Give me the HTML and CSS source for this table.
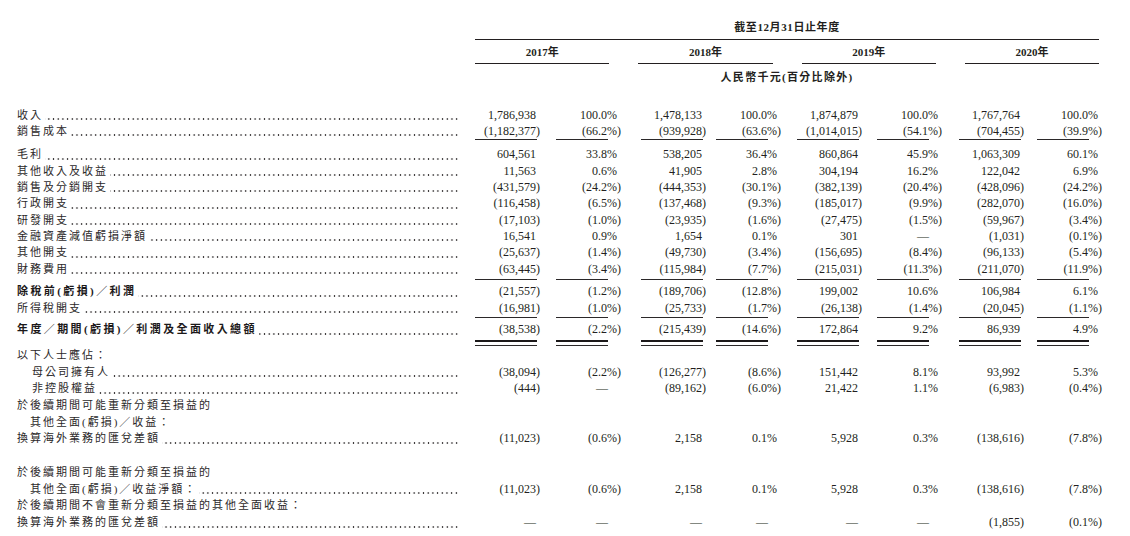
FILE: index.html
```html
<!DOCTYPE html>
<html lang="zh-Hant">
<head>
<meta charset="utf-8">
<title>綜合損益表</title>
<link rel="stylesheet" href="styles.css">
</head>
<body>
<div class="page">
  <div class="head">
    <div class="title">截至12月31日止年度</div>
    <div class="topline"></div>
    <div class="years">
      <div class="year">2017年</div>
      <div class="year">2018年</div>
      <div class="year">2019年</div>
      <div class="year">2020年</div>
    </div>
    <div class="sub">人民幣千元(百分比除外)</div>
  </div>

  <div class="table">
    <div class="row">
      <div class="lab"><span>收入</span><span class="dots"></span></div>
      <div class="n">1,786,938</div><div class="n">100.0%</div>
      <div class="n">1,478,133</div><div class="n">100.0%</div>
      <div class="n">1,874,879</div><div class="n">100.0%</div>
      <div class="n">1,767,764</div><div class="n">100.0%</div>
    </div>
    <div class="row">
      <div class="lab"><span>銷售成本</span><span class="dots"></span></div>
      <div class="n">(1,182,377<span class="cp">)</span></div><div class="n">(66.2%<span class="cp">)</span></div>
      <div class="n">(939,928<span class="cp">)</span></div><div class="n">(63.6%<span class="cp">)</span></div>
      <div class="n">(1,014,015<span class="cp">)</span></div><div class="n">(54.1%<span class="cp">)</span></div>
      <div class="n">(704,455<span class="cp">)</span></div><div class="n">(39.9%<span class="cp">)</span></div>
    </div>
    <div class="rule r1">
      <div></div>
      <div class="ua"></div><div class="up"></div>
      <div class="ua"></div><div class="up"></div>
      <div class="ua"></div><div class="up"></div>
      <div class="ua"></div><div class="up"></div>
    </div>

    <div class="row m">
      <div class="lab"><span>毛利</span><span class="dots"></span></div>
      <div class="n">604,561</div><div class="n">33.8%</div>
      <div class="n">538,205</div><div class="n">36.4%</div>
      <div class="n">860,864</div><div class="n">45.9%</div>
      <div class="n">1,063,309</div><div class="n">60.1%</div>
    </div>
    <div class="row m">
      <div class="lab"><span>其他收入及收益</span><span class="dots"></span></div>
      <div class="n">11,563</div><div class="n">0.6%</div>
      <div class="n">41,905</div><div class="n">2.8%</div>
      <div class="n">304,194</div><div class="n">16.2%</div>
      <div class="n">122,042</div><div class="n">6.9%</div>
    </div>
    <div class="row m">
      <div class="lab"><span>銷售及分銷開支</span><span class="dots"></span></div>
      <div class="n">(431,579<span class="cp">)</span></div><div class="n">(24.2%<span class="cp">)</span></div>
      <div class="n">(444,353<span class="cp">)</span></div><div class="n">(30.1%<span class="cp">)</span></div>
      <div class="n">(382,139<span class="cp">)</span></div><div class="n">(20.4%<span class="cp">)</span></div>
      <div class="n">(428,096<span class="cp">)</span></div><div class="n">(24.2%<span class="cp">)</span></div>
    </div>
    <div class="row m">
      <div class="lab"><span>行政開支</span><span class="dots"></span></div>
      <div class="n">(116,458<span class="cp">)</span></div><div class="n">(6.5%<span class="cp">)</span></div>
      <div class="n">(137,468<span class="cp">)</span></div><div class="n">(9.3%<span class="cp">)</span></div>
      <div class="n">(185,017<span class="cp">)</span></div><div class="n">(9.9%<span class="cp">)</span></div>
      <div class="n">(282,070<span class="cp">)</span></div><div class="n">(16.0%<span class="cp">)</span></div>
    </div>
    <div class="row m">
      <div class="lab"><span>研發開支</span><span class="dots"></span></div>
      <div class="n">(17,103<span class="cp">)</span></div><div class="n">(1.0%<span class="cp">)</span></div>
      <div class="n">(23,935<span class="cp">)</span></div><div class="n">(1.6%<span class="cp">)</span></div>
      <div class="n">(27,475<span class="cp">)</span></div><div class="n">(1.5%<span class="cp">)</span></div>
      <div class="n">(59,967<span class="cp">)</span></div><div class="n">(3.4%<span class="cp">)</span></div>
    </div>
    <div class="row m">
      <div class="lab"><span>金融資產減值虧損淨額</span><span class="dots"></span></div>
      <div class="n">16,541</div><div class="n">0.9%</div>
      <div class="n">1,654</div><div class="n">0.1%</div>
      <div class="n">301</div><div class="n d">—</div>
      <div class="n">(1,031<span class="cp">)</span></div><div class="n">(0.1%<span class="cp">)</span></div>
    </div>
    <div class="row m">
      <div class="lab"><span>其他開支</span><span class="dots"></span></div>
      <div class="n">(25,637<span class="cp">)</span></div><div class="n">(1.4%<span class="cp">)</span></div>
      <div class="n">(49,730<span class="cp">)</span></div><div class="n">(3.4%<span class="cp">)</span></div>
      <div class="n">(156,695<span class="cp">)</span></div><div class="n">(8.4%<span class="cp">)</span></div>
      <div class="n">(96,133<span class="cp">)</span></div><div class="n">(5.4%<span class="cp">)</span></div>
    </div>
    <div class="row m">
      <div class="lab"><span>財務費用</span><span class="dots"></span></div>
      <div class="n">(63,445<span class="cp">)</span></div><div class="n">(3.4%<span class="cp">)</span></div>
      <div class="n">(115,984<span class="cp">)</span></div><div class="n">(7.7%<span class="cp">)</span></div>
      <div class="n">(215,031<span class="cp">)</span></div><div class="n">(11.3%<span class="cp">)</span></div>
      <div class="n">(211,070<span class="cp">)</span></div><div class="n">(11.9%<span class="cp">)</span></div>
    </div>
    <div class="rule r2">
      <div></div>
      <div class="ua"></div><div class="up"></div>
      <div class="ua"></div><div class="up"></div>
      <div class="ua"></div><div class="up"></div>
      <div class="ua"></div><div class="up"></div>
    </div>

    <div class="row m">
      <div class="lab bold"><span>除稅前(虧損)／利潤</span><span class="dots"></span></div>
      <div class="n">(21,557<span class="cp">)</span></div><div class="n">(1.2%<span class="cp">)</span></div>
      <div class="n">(189,706<span class="cp">)</span></div><div class="n">(12.8%<span class="cp">)</span></div>
      <div class="n">199,002</div><div class="n">10.6%</div>
      <div class="n">106,984</div><div class="n">6.1%</div>
    </div>
    <div class="row m">
      <div class="lab"><span>所得稅開支</span><span class="dots"></span></div>
      <div class="n">(16,981<span class="cp">)</span></div><div class="n">(1.0%<span class="cp">)</span></div>
      <div class="n">(25,733<span class="cp">)</span></div><div class="n">(1.7%<span class="cp">)</span></div>
      <div class="n">(26,138<span class="cp">)</span></div><div class="n">(1.4%<span class="cp">)</span></div>
      <div class="n">(20,045<span class="cp">)</span></div><div class="n">(1.1%<span class="cp">)</span></div>
    </div>
    <div class="rule r3">
      <div></div>
      <div class="ua"></div><div class="up"></div>
      <div class="ua"></div><div class="up"></div>
      <div class="ua"></div><div class="up"></div>
      <div class="ua"></div><div class="up"></div>
    </div>

    <div class="row m">
      <div class="lab bold"><span>年度／期間(虧損)／利潤及全面收入總額</span><span class="dots"></span></div>
      <div class="n">(38,538<span class="cp">)</span></div><div class="n">(2.2%<span class="cp">)</span></div>
      <div class="n">(215,439<span class="cp">)</span></div><div class="n">(14.6%<span class="cp">)</span></div>
      <div class="n">172,864</div><div class="n">9.2%</div>
      <div class="n">86,939</div><div class="n">4.9%</div>
    </div>
    <div class="rule r4">
      <div></div>
      <div class="ua dbl"></div><div class="up dbl"></div>
      <div class="ua dbl"></div><div class="up dbl"></div>
      <div class="ua dbl"></div><div class="up dbl"></div>
      <div class="ua dbl"></div><div class="up dbl"></div>
    </div>

    <div class="row b">
      <div class="lab"><span>以下人士應佔：</span></div>
    </div>
    <div class="row b">
      <div class="lab i1"><span>母公司擁有人</span><span class="dots"></span></div>
      <div class="n">(38,094<span class="cp">)</span></div><div class="n">(2.2%<span class="cp">)</span></div>
      <div class="n">(126,277<span class="cp">)</span></div><div class="n">(8.6%<span class="cp">)</span></div>
      <div class="n">151,442</div><div class="n">8.1%</div>
      <div class="n">93,992</div><div class="n">5.3%</div>
    </div>
    <div class="row b">
      <div class="lab i1"><span>非控股權益</span><span class="dots"></span></div>
      <div class="n">(444<span class="cp">)</span></div><div class="n d">—</div>
      <div class="n">(89,162<span class="cp">)</span></div><div class="n">(6.0%<span class="cp">)</span></div>
      <div class="n">21,422</div><div class="n">1.1%</div>
      <div class="n">(6,983<span class="cp">)</span></div><div class="n">(0.4%<span class="cp">)</span></div>
    </div>
    <div class="row b">
      <div class="lab"><span>於後續期間可能重新分類至損益的</span></div>
    </div>
    <div class="row b">
      <div class="lab i2"><span>其他全面(虧損)／收益：</span></div>
    </div>
    <div class="row b">
      <div class="lab"><span>換算海外業務的匯兌差額</span><span class="dots"></span></div>
      <div class="n">(11,023<span class="cp">)</span></div><div class="n">(0.6%<span class="cp">)</span></div>
      <div class="n">2,158</div><div class="n">0.1%</div>
      <div class="n">5,928</div><div class="n">0.3%</div>
      <div class="n">(138,616<span class="cp">)</span></div><div class="n">(7.8%<span class="cp">)</span></div>
    </div>
    <div class="row b"></div>
    <div class="row b">
      <div class="lab"><span>於後續期間可能重新分類至損益的</span></div>
    </div>
    <div class="row b">
      <div class="lab i2"><span>其他全面(虧損)／收益淨額：</span><span class="dots"></span></div>
      <div class="n">(11,023<span class="cp">)</span></div><div class="n">(0.6%<span class="cp">)</span></div>
      <div class="n">2,158</div><div class="n">0.1%</div>
      <div class="n">5,928</div><div class="n">0.3%</div>
      <div class="n">(138,616<span class="cp">)</span></div><div class="n">(7.8%<span class="cp">)</span></div>
    </div>
    <div class="row b">
      <div class="lab"><span>於後續期間不會重新分類至損益的其他全面收益：</span></div>
    </div>
    <div class="row b">
      <div class="lab"><span>換算海外業務的匯兌差額</span><span class="dots"></span></div>
      <div class="n">—</div><div class="n d">—</div>
      <div class="n">—</div><div class="n d">—</div>
      <div class="n">—</div><div class="n d">—</div>
      <div class="n">(1,855<span class="cp">)</span></div><div class="n">(0.1%<span class="cp">)</span></div>
    </div>
  </div>
</div>
</body>
</html>
```
FILE: styles.css
```css
* {
  box-sizing: border-box;
  margin: 0;
  padding: 0;
}

body {
  margin: 0;
  background: #ffffff;
  color: #231f20;
  font-family: "Liberation Serif", "Noto Sans CJK TC", serif;
}

.page {
  width: 1130px;
  height: 536px;
  padding-top: 19px;
  overflow: hidden;
}

/* ---------- header ---------- */
.head {
  margin-left: 475px;
  width: 624px;
}

.title {
  height: 16px;
  line-height: 16px;
  text-align: center;
  font-size: 11px;
  font-weight: 700;
  letter-spacing: 0.6px;
}

.topline {
  margin-top: 4.3px;
  border-top: 1.5px solid #231f20;
}

.years {
  display: flex;
  gap: 29px;
  margin-top: 4.2px;
}

.year {
  flex: 1;
  height: 19.8px;
  line-height: 16px;
  padding-bottom: 2.3px;
  text-align: center;
  font-size: 11px;
  font-weight: 700;
  border-bottom: 1.5px solid #231f20;
}

.sub {
  margin-top: 5.2px;
  height: 16px;
  line-height: 16px;
  text-align: center;
  font-size: 11px;
  font-weight: 700;
  letter-spacing: 1.3px;
}

/* ---------- table ---------- */
.table {
  margin-top: 22px;
}

.row,
.rule {
  display: grid;
  grid-template-columns: 475px 61px 81px 85px 75px 81px 80px 82px 78px;
}

.row {
  height: 16px;
  line-height: 16px;
}

.row.m {
  height: 16.3px;
  line-height: 16.3px;
}

.row.b {
  height: 16.7px;
  line-height: 16.7px;
}

.lab {
  display: flex;
  padding-left: 17px;
  padding-right: 16px;
  font-size: 11px;
  letter-spacing: 2px;
  white-space: nowrap;
  color: #2b2829;
}

.lab.bold {
  font-weight: 700;
  letter-spacing: 2.4px;
  color: #1c191a;
}

.lab.i1 {
  padding-left: 32px;
}

.lab.i2 {
  padding-left: 30px;
}

.dots {
  flex: 1;
  height: 2px;
  align-self: flex-end;
  margin-bottom: 3px;
  margin-left: 2px;
  background-image: radial-gradient(circle, #3a3738 0 0.75px, transparent 1.1px);
  background-size: 4.7px 2px;
  background-position: right bottom;
  background-repeat: repeat-x;
}

.n {
  text-align: right;
  font-size: 12px;
  white-space: nowrap;
}

.cp {
  margin-right: -4px;
}

.n.d {
  padding-right: 9px;
}

/* ---------- rules ---------- */
.rule {
  align-items: start;
}

.r1 {
  height: 7px;
}

.r2 {
  height: 6.6px;
  padding-top: 2.4px;
}

.r3 {
  height: 5.4px;
  padding-top: 1.4px;
}

.r4 {
  height: 9.3px;
  padding-top: 2.5px;
}

.ua,
.up {
  justify-self: end;
  height: 0;
  border-top: 1.3px solid #2b2829;
}

.ua {
  width: 62px;
  margin-right: -1px;
}

.up {
  width: 52px;
  margin-right: 9px;
}

.ua.dbl,
.up.dbl {
  height: 5.6px;
  border-top: 2.4px solid #1c191a;
  border-bottom: 1.6px solid #2b2829;
}
```
